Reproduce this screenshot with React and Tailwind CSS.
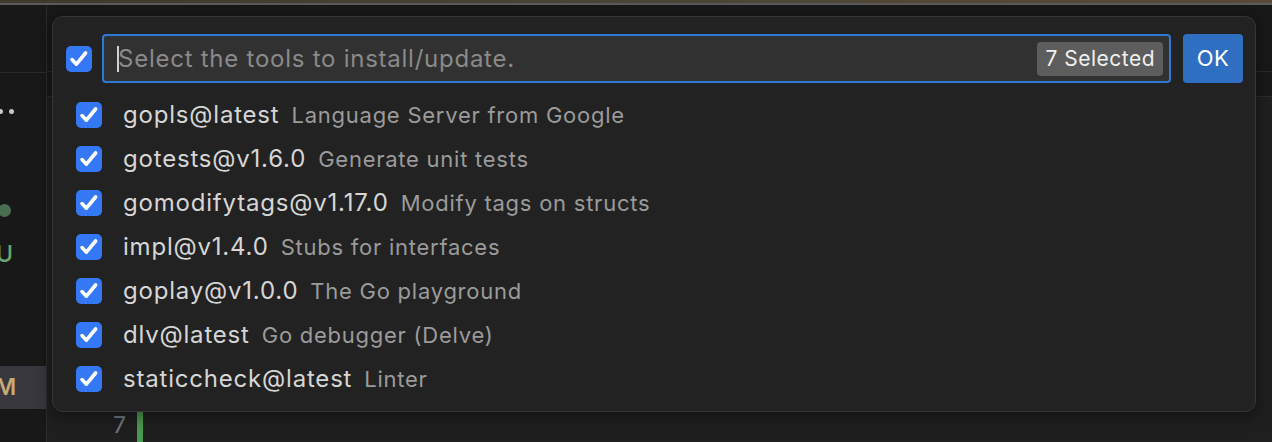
import React from "react";

const tools = [
  { name: "gopls@latest", desc: "Language Server from Google" },
  { name: "gotests@v1.6.0", desc: "Generate unit tests" },
  { name: "gomodifytags@v1.17.0", desc: "Modify tags on structs" },
  { name: "impl@v1.4.0", desc: "Stubs for interfaces" },
  { name: "goplay@v1.0.0", desc: "The Go playground" },
  { name: "dlv@latest", desc: "Go debugger (Delve)" },
  { name: "staticcheck@latest", desc: "Linter" },
];

const CheckBox = () => (
  <div className="w-[26px] h-[26px] rounded-[5px] bg-[#3478f6] flex items-center justify-center shrink-0">
    <svg width="26" height="26" viewBox="0 0 26 26" fill="none">
      <path
        d="M6 13.6 L10.4 18.2 L19.6 7"
        stroke="#ffffff"
        strokeWidth="3.6"
        strokeLinecap="round"
        strokeLinejoin="round"
      />
    </svg>
  </div>
);

const App = () => {
  return (
    <div className="relative w-[1272px] h-[442px] overflow-hidden bg-[#1f1f1f] flex flex-col font-['Inter',sans-serif]">
      <div className="h-[3px] bg-gradient-to-r from-[#3b3a2c] via-[#4a4536] to-[#5a4a38]" />
      <div className="h-[2px] bg-[#5b5b5b]" />

      <div className="flex flex-1">
        {/* side bar, scrolled so its letters are cut at the left edge */}
        <div className="w-[47px] bg-[#181818] border-r border-[#2b2b2b] flex flex-col">
          <div className="h-[68px] border-b border-[#2b2b2b]" />
          <div className="flex gap-[6px] mt-[36px] -ml-[2px]">
            <span className="w-[5px] h-[5px] rounded-full bg-[#c8c8c8]" />
            <span className="w-[5px] h-[5px] rounded-full bg-[#c8c8c8]" />
          </div>
          <div className="w-[13px] h-[13px] rounded-full bg-[#4b6e52] mt-[90px] -ml-[2px]" />
          <div className="mt-[24px] text-[23px] leading-[26px] font-medium text-[#6aa571] -ml-[4px]">U</div>
          <div className="mt-[99px] h-[43px] bg-[#37373d] flex items-center text-[23px] font-semibold text-[#c8a877]">
            <span className="-ml-[5px]">M</span>
          </div>
        </div>

        <div className="flex-1 flex flex-col">
          <div className="h-[67px] bg-[#181818] border-b border-[#2b2b2b]" />
          <div className="h-[25px] bg-[#181818] border-b border-[#2b2b2b]" />
          <div className="flex-1 bg-[#1f1f1f] flex flex-col justify-end">
            <div className="flex h-[33px]">
              <div className="w-[79px] text-right text-[23px] leading-[26px] text-[#6e7681] pt-[3px]">7</div>
              <div className="ml-[11px] w-[6px] bg-[#4a9a4e]" />
            </div>
          </div>
        </div>
      </div>

      {/* quick pick popup */}
      <div className="absolute left-[52px] top-[16px] w-[1204px] h-[396px] rounded-[11px] bg-[#222222] border border-[#363636] shadow-[0_4px_16px_rgba(0,0,0,0.45)] flex flex-col">
        <div className="flex items-center mt-[17px] pl-[13px] pr-[12px] h-[49px]">
          <CheckBox />
          <div className="ml-[10px] flex-1 h-[49px] rounded-[4px] border-2 border-[#2e7ad3] bg-[#313131] flex items-center pl-[13px] pr-[6px]">
            <div className="w-[2px] h-[26px] bg-[#d0d0d0] -mr-[1px]" />
            <span className="text-[24px] tracking-[0.75px] text-[#8a8a8a] leading-none">Select the tools to install/update.</span>
            <div className="ml-auto h-[34px] px-[8px] rounded-[4px] bg-[#5d5d5d] flex items-center text-[21px] tracking-[0.5px] text-[#f0f0f0]">
              7 Selected
            </div>
          </div>
          <div className="ml-[12px] w-[60px] h-[49px] rounded-[4px] bg-[#2f6fc1] flex items-center justify-center text-[22px] tracking-[0.5px] text-white">
            OK
          </div>
        </div>

        <div className="mt-[10px] flex flex-col">
          {tools.map((t) => (
            <div key={t.name} className="h-[44px] flex items-center pl-[23px]">
              <CheckBox />
              <span className="ml-[21px] text-[24px] tracking-[0.8px] text-[#d6d6d6]">{t.name}</span>
              <span className="ml-[12px] text-[22px] tracking-[0.75px] text-[#9b9b9b]">{t.desc}</span>
            </div>
          ))}
        </div>
      </div>
    </div>
  );
};

export default App;
